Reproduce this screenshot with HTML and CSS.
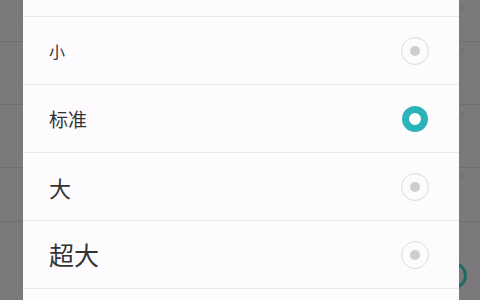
FILE: index.html
```html
<!DOCTYPE html>
<html lang="zh">
<head>
<meta charset="utf-8">
<link rel="stylesheet" href="styles.css">
</head>
<body>
<div class="screen">
  <div class="bg-list">
    <div class="bg-row r1"><svg class="chev" viewBox="0 0 4 8"><path d="M0.5 0.5 L3.5 4 L0.5 7.5"/></svg></div>
    <div class="bg-row r2"><svg class="chev" viewBox="0 0 4 8"><path d="M0.5 0.5 L3.5 4 L0.5 7.5"/></svg></div>
    <div class="bg-row r3"><svg class="chev" viewBox="0 0 4 8"><path d="M0.5 0.5 L3.5 4 L0.5 7.5"/></svg></div>
    <div class="bg-row r4"><svg class="chev" viewBox="0 0 4 8"><path d="M0.5 0.5 L3.5 4 L0.5 7.5"/></svg></div>
    <div class="bg-row r5"><span class="bg-ring"></span></div>
  </div>
  <div class="dialog">
    <div class="dlg-head"></div>
    <div class="opt"><span class="label s1">小</span><span class="radio"></span></div>
    <div class="opt"><span class="label s2">标准</span><span class="radio on"></span></div>
    <div class="opt"><span class="label s3">大</span><span class="radio"></span></div>
    <div class="opt"><span class="label s4">超大</span><span class="radio"></span></div>
    <div class="opt"></div>
  </div>
</div>
</body>
</html>
```
FILE: styles.css
```css
* { box-sizing: border-box; }
html, body { margin: 0; padding: 0; }
body {
  width: 480px;
  height: 300px;
  overflow: hidden;
  font-family: "Noto Sans CJK SC", "Noto Sans", sans-serif;
  background: #7b797c;
}
.screen {
  position: relative;
  width: 480px;
  height: 300px;
  overflow: hidden;
}
.bg-list {
  display: flex;
  flex-direction: column;
}
.bg-row {
  position: relative;
  border-bottom: 1px solid #706e71;
  display: flex;
  justify-content: flex-end;
  padding-right: 16px;
}
.r1 { height: 42px; align-items: flex-start; padding-top: 4px; }
.r2 { height: 63px; align-items: flex-start; padding-top: 5px; }
.r3 { height: 63px; align-items: flex-start; padding-top: 6px; }
.r4 { height: 54px; align-items: flex-start; padding-top: 4px; }
.r5 { height: 90px; border-bottom: none; }
.chev {
  width: 4px;
  height: 8px;
  fill: none;
  stroke: #6a686b;
  stroke-width: 1;
}
.bg-ring {
  position: absolute;
  left: 440px;
  top: 40px;
  width: 27px;
  height: 27px;
  border-radius: 50%;
  border: 3px solid #1f6a66;
}
.dialog {
  position: absolute;
  left: 23px;
  top: -52px;
  width: 436px;
  background: #fdfbfd;
  display: flex;
  flex-direction: column;
}
.dlg-head { height: 68px; }
.opt {
  height: 68px;
  border-top: 1px solid #ebe9eb;
  display: flex;
  align-items: center;
  justify-content: space-between;
  padding: 0 30px 0 26px;
  color: #333333;
}
.label { line-height: 1; }
.s1 { font-size: 16px; }
.s2 { font-size: 19px; }
.s3 { font-size: 22px; }
.s4 { font-size: 25px; }
.radio {
  width: 28px;
  height: 28px;
  border-radius: 50%;
  border: 1.5px solid #dcdadc;
  display: flex;
  align-items: center;
  justify-content: center;
}
.radio::after {
  content: "";
  width: 10px;
  height: 10px;
  border-radius: 50%;
  background: #cfcdcf;
}
.radio.on {
  width: 26px;
  height: 26px;
  margin-right: 1px;
  border: 7.5px solid #2ab4b9;
  background: #ffffff;
}
.radio.on::after { display: none; }
```
